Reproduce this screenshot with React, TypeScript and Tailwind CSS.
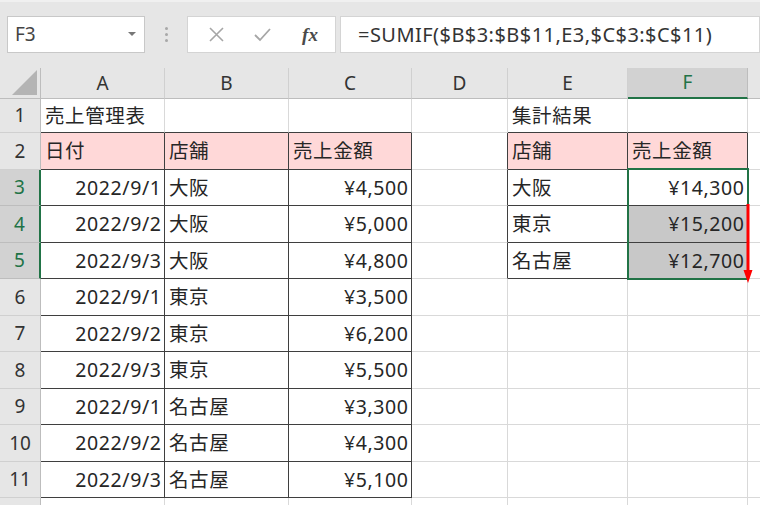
import React from "react";

const data: string[][] = [
  ["売上管理表", "", "", "", "集計結果", ""],
  ["日付", "店舗", "売上金額", "", "店舗", "売上金額"],
  ["2022/9/1", "大阪", "¥4,500", "", "大阪", "¥14,300"],
  ["2022/9/2", "大阪", "¥5,000", "", "東京", "¥15,200"],
  ["2022/9/3", "大阪", "¥4,800", "", "名古屋", "¥12,700"],
  ["2022/9/1", "東京", "¥3,500", "", "", ""],
  ["2022/9/2", "東京", "¥6,200", "", "", ""],
  ["2022/9/3", "東京", "¥5,500", "", "", ""],
  ["2022/9/1", "名古屋", "¥3,300", "", "", ""],
  ["2022/9/2", "名古屋", "¥4,300", "", "", ""],
  ["2022/9/3", "名古屋", "¥5,100", "", "", ""],
];

const cols = ["A", "B", "C", "D", "E", "F"];

function inLeftTable(r: number, c: number) {
  return r >= 2 && r <= 11 && c >= 0 && c <= 2;
}
function inRightTable(r: number, c: number) {
  return r >= 2 && r <= 5 && c >= 4 && c <= 5;
}

function DataCell({ r, c, text }: { r: number; c: number; text: string }) {
  const inTable = inLeftTable(r, c) || inRightTable(r, c);
  const darkBottom = inTable || (r === 1 && (c <= 2 || c >= 4));
  const darkRight = inTable || (c === 3 && r >= 2 && r <= 5);
  const header = r === 2 && (c <= 2 || c >= 4);
  const selected = c === 5 && (r === 4 || r === 5);
  const right = (r >= 3 && (c === 0 || c === 2)) || (c === 5 && r >= 3);
  return (
    <div
      className={
        "flex items-center px-[4px] border-r border-b text-[19.5px] tracking-[0.6px] text-[#262626] whitespace-nowrap overflow-visible " +
        (darkBottom ? "border-b-[#3f3f3f] " : "border-b-[#d9d9d9] ") +
        (darkRight ? "border-r-[#3f3f3f] " : "border-r-[#d9d9d9] ") +
        (header ? "bg-[#ffd8d8] " : selected ? "bg-[#c8c8c8] " : "bg-white ") +
        (right ? "justify-end pr-[2.5px]" : "justify-start")
      }
    >
      {text}
    </div>
  );
}

export default function App() {
  return (
    <div className="relative w-[760px] h-[505px] overflow-hidden bg-white font-['Noto_Sans','Noto_Sans_CJK_JP',sans-serif]">
      {/* Toolbar */}
      <div className="h-[68px] bg-[#e6e6e6] border-t-[2px] border-t-[#f0f0f0] flex items-start pt-[14px]">
        <div className="ml-[7px] w-[138px] h-[37px] bg-white border border-[#c8c8c8] flex items-center justify-between pl-[7px] pr-[8px]">
          <span className="text-[19px] text-[#444] leading-none">F3</span>
          <svg width="8" height="5" viewBox="0 0 8 5">
            <polygon points="0,0 8,0 4,4" fill="#777" />
          </svg>
        </div>
        <div className="w-[42px] h-[37px] flex flex-col items-center justify-center gap-[3px]">
          <div className="w-[3px] h-[3px] rounded-full bg-[#a8a8a8]" />
          <div className="w-[3px] h-[3px] rounded-full bg-[#a8a8a8]" />
          <div className="w-[3px] h-[3px] rounded-full bg-[#a8a8a8]" />
        </div>
        <div className="w-[149px] h-[37px] bg-white border border-[#d4d4d4] flex items-center">
          <div className="w-[50px] flex justify-center pl-[6px]">
            <svg width="15" height="15" viewBox="0 0 15 15">
              <path d="M1 1 L14 14 M14 1 L1 14" stroke="#a6a6a6" strokeWidth="1.6" fill="none" />
            </svg>
          </div>
          <div className="w-[48px] flex justify-center">
            <svg width="17" height="14" viewBox="0 0 17 14">
              <path d="M1 7 L6 12 L16 1" stroke="#a6a6a6" strokeWidth="1.8" fill="none" />
            </svg>
          </div>
          <div className="w-[48px] flex justify-center">
            <span className="font-['Liberation_Serif',serif] italic font-bold text-[19px] text-[#4a4a4a] leading-none">fx</span>
          </div>
        </div>
        <div className="ml-[4px] flex-1 h-[37px] bg-white border border-[#d4d4d4] flex items-center pl-[17px]">
          <span className="text-[20px] tracking-[0.45px] text-[#333] leading-none whitespace-nowrap">
            =SUMIF($B$3:$B$11,E3,$C$3:$C$11)
          </span>
        </div>
      </div>

      {/* Column header row */}
      <div className="grid grid-cols-[41px_124px_124px_123px_96px_120px_120px_1fr] h-[31px] bg-[#e6e6e6]">
        <div className="relative border-r border-b border-r-[#bdbdbd] border-b-[#bdbdbd]">
          <svg className="absolute right-[3px] bottom-[3px]" width="25" height="25" viewBox="0 0 25 25">
            <polygon points="25,0 25,25 0,25" fill="#b4b4b4" />
          </svg>
        </div>
        {cols.map((c) => (
          <div
            key={c}
            className={
              "flex items-center justify-center text-[19px] border-r " +
              (c === "F"
                ? "bg-[#d2d2d2] text-[#217346] border-b-[2px] border-b-[#217346] border-r-[#bdbdbd]"
                : "text-[#333] border-b border-b-[#bdbdbd] border-r-[#d0d0d0]")
            }
          >
            {c}
          </div>
        ))}
        <div className="border-b border-b-[#bdbdbd]" />
      </div>

      {/* Data rows */}
      {data.map((row, i) => {
        const r = i + 1;
        const sel = r >= 3 && r <= 5;
        return (
          <div
            key={r}
            className={
              "grid grid-cols-[41px_124px_124px_123px_96px_120px_120px_1fr] " +
              (r === 1 ? "h-[34px]" : "h-[36.5px]")
            }
          >
            <div
              className={
                "flex items-center justify-center text-[19px] border-b " +
                (sel
                  ? "bg-[#d2d2d2] text-[#217346] border-r-[2px] border-r-[#217346] border-b-[#bdbdbd]"
                  : "bg-[#e6e6e6] text-[#333] border-r border-r-[#bdbdbd] border-b-[#d0d0d0]")
              }
            >
              {r}
            </div>
            {row.map((t, c) => (
              <DataCell key={c} r={r} c={c} text={t} />
            ))}
            <div className="border-b border-b-[#d9d9d9]" />
          </div>
        );
      })}
      <div className="grid grid-cols-[41px_124px_124px_123px_96px_120px_120px_1fr] h-[20px]">
        <div className="bg-[#e6e6e6] border-r border-r-[#bdbdbd]" />
        <div className="border-r border-r-[#d9d9d9]" />
        <div className="border-r border-r-[#d9d9d9]" />
        <div className="border-r border-r-[#d9d9d9]" />
        <div className="border-r border-r-[#d9d9d9]" />
        <div className="border-r border-r-[#d9d9d9]" />
        <div className="border-r border-r-[#d9d9d9]" />
        <div />
      </div>

      {/* Selection F3:F5 */}
      <div className="absolute left-[627px] top-[168px] w-[122px] h-[112px] border-2 border-[#217346] pointer-events-none" />

      {/* Red arrow */}
      <svg className="absolute left-[742px] top-[204px]" width="12" height="80" viewBox="0 0 12 80">
        <line x1="6" y1="0" x2="6" y2="68" stroke="#ff0000" strokeWidth="3" />
        <polygon points="1.5,66 10.5,66 6,79" fill="#ff0000" />
      </svg>
    </div>
  );
}
